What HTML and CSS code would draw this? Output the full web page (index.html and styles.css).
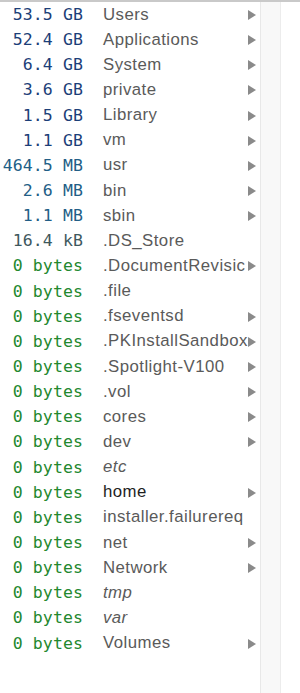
FILE: index.html
```html
<!DOCTYPE html>
<html lang="en">
<head>
    <meta charset="UTF-8">
    <meta name="viewport" content="width=device-width, initial-scale=1.0">
    <title>Disk Usage</title>
    <link rel="stylesheet" href="styles.css">
</head>
<body>
    <div class="pane">
        <ul class="listing">
            <li class="row"><span class="size gb">53.5 GB</span><span class="name">Users</span><span class="arrow"></span></li>
            <li class="row"><span class="size gb">52.4 GB</span><span class="name">Applications</span><span class="arrow"></span></li>
            <li class="row"><span class="size gb">6.4 GB</span><span class="name">System</span><span class="arrow"></span></li>
            <li class="row"><span class="size gb">3.6 GB</span><span class="name">private</span><span class="arrow"></span></li>
            <li class="row"><span class="size gb">1.5 GB</span><span class="name">Library</span><span class="arrow"></span></li>
            <li class="row"><span class="size gb">1.1 GB</span><span class="name">vm</span><span class="arrow"></span></li>
            <li class="row"><span class="size mb">464.5 MB</span><span class="name">usr</span><span class="arrow"></span></li>
            <li class="row"><span class="size mb">2.6 MB</span><span class="name">bin</span><span class="arrow"></span></li>
            <li class="row"><span class="size mb">1.1 MB</span><span class="name">sbin</span><span class="arrow"></span></li>
            <li class="row"><span class="size kb">16.4 kB</span><span class="name">.DS_Store</span><span class="no-arrow"></span></li>
            <li class="row"><span class="size bytes">0 bytes</span><span class="name">.DocumentRevisic</span><span class="arrow"></span></li>
            <li class="row"><span class="size bytes">0 bytes</span><span class="name">.file</span><span class="no-arrow"></span></li>
            <li class="row"><span class="size bytes">0 bytes</span><span class="name">.fseventsd</span><span class="arrow"></span></li>
            <li class="row"><span class="size bytes">0 bytes</span><span class="name">.PKInstallSandbox</span><span class="arrow"></span></li>
            <li class="row"><span class="size bytes">0 bytes</span><span class="name">.Spotlight-V100</span><span class="arrow"></span></li>
            <li class="row"><span class="size bytes">0 bytes</span><span class="name">.vol</span><span class="arrow"></span></li>
            <li class="row"><span class="size bytes">0 bytes</span><span class="name">cores</span><span class="arrow"></span></li>
            <li class="row"><span class="size bytes">0 bytes</span><span class="name">dev</span><span class="arrow"></span></li>
            <li class="row"><span class="size bytes">0 bytes</span><span class="name link">etc</span><span class="no-arrow"></span></li>
            <li class="row"><span class="size bytes">0 bytes</span><span class="name dark">home</span><span class="arrow"></span></li>
            <li class="row"><span class="size bytes">0 bytes</span><span class="name">installer.failurereq</span><span class="no-arrow"></span></li>
            <li class="row"><span class="size bytes">0 bytes</span><span class="name">net</span><span class="arrow"></span></li>
            <li class="row"><span class="size bytes">0 bytes</span><span class="name">Network</span><span class="arrow"></span></li>
            <li class="row"><span class="size bytes">0 bytes</span><span class="name link">tmp</span><span class="no-arrow"></span></li>
            <li class="row"><span class="size bytes">0 bytes</span><span class="name link">var</span><span class="no-arrow"></span></li>
            <li class="row"><span class="size bytes">0 bytes</span><span class="name">Volumes</span><span class="arrow"></span></li>
        </ul>
        <div class="gutter"></div>
        <div class="rest"></div>
    </div>
</body>
</html>
```

FILE: styles.css
```css
html, body {
    margin: 0;
    padding: 0;
    background: #fff;
}
body {
    font-family: "Liberation Sans", Arial, sans-serif;
    border-top: 2px solid #c9c9c9;
    height: 691px;
    overflow: hidden;
}
.pane {
    display: flex;
    height: 100%;
}
.listing {
    list-style: none;
    margin: 0;
    padding: 0;
    width: 260px;
    flex: none;
}
.row {
    display: flex;
    align-items: center;
    height: 25.15px;
}
.size {
    width: 83px;
    flex: none;
    text-align: right;
    font-family: "DejaVu Sans Mono", "Liberation Mono", monospace;
    font-size: 16.5px;
    letter-spacing: 0.1px;
}
.gb { color: #1c3e78; }
.mb { color: #225e86; }
.kb { color: #3e585d; }
.bytes { color: #23882e; }
.name {
    flex: 1;
    min-width: 0;
    margin-left: 20px;
    white-space: nowrap;
    font-size: 16.8px;
    letter-spacing: 0.45px;
    color: #5a5a5a;
}
.name.dark { color: #1e1e1e; }
.name.link { font-style: italic; }
.arrow, .no-arrow {
    width: 15px;
    flex: none;
    height: 25px;
}
.arrow {
    position: relative;
}
.arrow::after {
    content: "";
    position: absolute;
    left: 3px;
    top: 8px;
    border-left: 8px solid #8a8a8a;
    border-top: 5px solid transparent;
    border-bottom: 5px solid transparent;
}
.gutter {
    width: 19px;
    flex: none;
    background: #f8f8f8;
    border-left: 1px solid #e8e8e8;
    border-right: 1px solid #ececec;
}
.rest {
    flex: 1;
}
```
